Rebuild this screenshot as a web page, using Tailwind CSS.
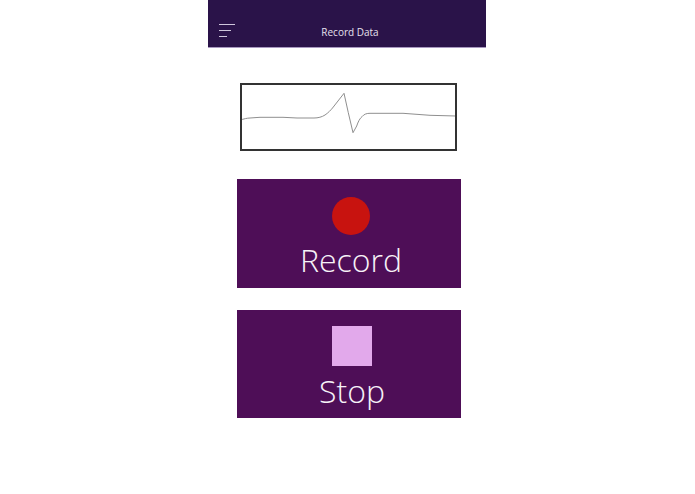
<!DOCTYPE html>
<html>
  <head>
    <title>Record Data</title>
    <meta charset="UTF-8" />
    <script src="https://cdn.jsdelivr.net/npm/@tailwindcss/browser@4"></script>
  </head>
  <body class="bg-white">
    <div class="ml-[208px] w-[278px] font-['Open_Sans',sans-serif]">
      <header class="h-[48px] bg-[#2a1349] border-b border-[#a898c0] flex items-end relative">
        <div class="absolute left-[11px] top-[24px] flex flex-col gap-[5px]">
          <div class="w-[16px] h-[1px] bg-[#cfc6dc]"></div>
          <div class="w-[12px] h-[1px] bg-[#cfc6dc]"></div>
          <div class="w-[8px] h-[1px] bg-[#cfc6dc]"></div>
        </div>
        <h1 class="w-full text-center text-[10px] leading-[14px] pb-[8px] pl-[6px] text-[#e6e0ee]">Record Data</h1>
      </header>

      <div class="mt-[35px] ml-[32px] w-[217px] h-[68px] border-2 border-[#333] bg-white">
        <svg width="213" height="64" viewBox="0 0 213 64" fill="none">
          <path
            d="M-2 35 C2 34 5 33 8 33 L18 32.3 L41 32.3 L55 33 L72 33 C76 33 80 32 83 30 C86 28 89 25 91.3 22 L102 8.3 L106.3 27.7 L111 47.7 L114.7 41 C116 37 118 33 120 31.7 C122 29 125 28.3 128 28.3 L161 28.3 L188 30.3 L214 31"
            stroke="#8f8f8f"
            stroke-width="1"
          />
        </svg>
      </div>

      <button class="mt-[28px] ml-[29px] w-[224px] h-[109px] bg-[#4e0e57] flex flex-col items-center pl-[4px]">
        <span class="mt-[18px] w-[38px] h-[38px] rounded-full bg-[#c8130f]"></span>
        <span class="mt-[2px] text-[32px] leading-[45px] font-light text-[#f7f2f8]">Record</span>
      </button>

      <button class="mt-[22px] ml-[29px] w-[224px] h-[108px] bg-[#4e0e57] flex flex-col items-center pl-[6px]">
        <span class="mt-[16px] w-[40px] h-[40px] bg-[#e2a9eb]"></span>
        <span class="mt-[2px] text-[32px] leading-[45px] font-light text-[#f7f2f8]">Stop</span>
      </button>
    </div>
  </body>
</html>
